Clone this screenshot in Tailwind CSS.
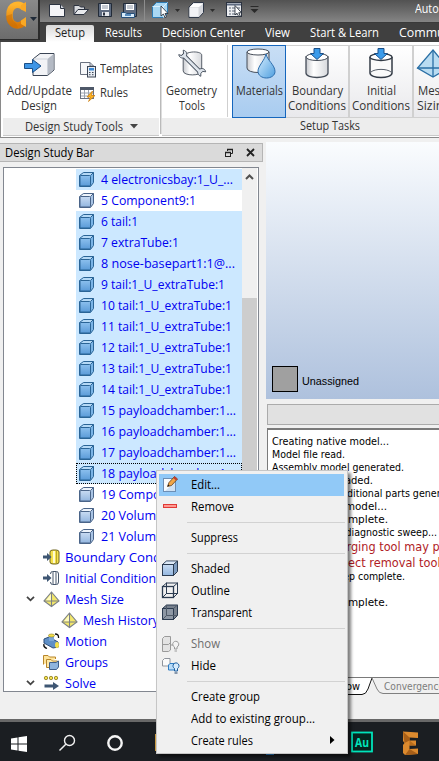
<!DOCTYPE html>
<html lang="en">
<head>
<meta charset="utf-8">
<title>Autodesk CFD</title>
<script src="https://cdn.jsdelivr.net/npm/@tailwindcss/browser@4"></script>
</head>
<body class="w-[439px] h-[761px] overflow-hidden relative bg-[#f0f0f0] font-['Open_Sans','Noto_Sans',sans-serif] text-[12px] text-black whitespace-nowrap">

<svg width="0" height="0" class="absolute">
  <defs>
    <linearGradient id="gBlue" x1="0" y1="0" x2="0" y2="1"><stop offset="0" stop-color="#8cc0ee"/><stop offset="1" stop-color="#5b9bd8"/></linearGradient>
    <linearGradient id="gPale" x1="0" y1="0" x2="0" y2="1"><stop offset="0" stop-color="#c9dcf3"/><stop offset="1" stop-color="#93b6df"/></linearGradient>
    <linearGradient id="gCyl" x1="0" y1="0" x2="1" y2="0"><stop offset="0" stop-color="#c9cbd0"/><stop offset=".35" stop-color="#fff"/><stop offset="1" stop-color="#d6d8dc"/></linearGradient>
    <linearGradient id="gDrop" x1="0" y1="0" x2="1" y2="1"><stop offset="0" stop-color="#d9efff"/><stop offset="1" stop-color="#4f9fdf"/></linearGradient>
    <linearGradient id="gC" x1="0" y1="0" x2="0" y2="1"><stop offset="0" stop-color="#ffb52e"/><stop offset="1" stop-color="#d97706"/></linearGradient>
    <symbol id="cubeSel" viewBox="0 0 16 16"><path d="M.5 4.500 4.500 1.500H14.500V11.500L11.500 15.500H.5Z" fill="#7ab4e6" stroke="#2a6496"/><path d="M1.500 4.500 4.700 2H14L11.500 4.500Z" fill="#b5d9f6"/><rect x="1" y="4.500" width="10.500" height="10.500" rx="1" fill="url(#gBlue)" stroke="#2a6496"/><path d="M11.500 4.500 14.500 1.500" stroke="#2a6496"/></symbol>
    <symbol id="cube" viewBox="0 0 16 16"><path d="M.5 4.500 4.500 1.500H14.500V11.500L11.500 15.500H.5Z" fill="#a9c4e4" stroke="#4a6488"/><path d="M1.500 4.500 4.700 2H14L11.500 4.500Z" fill="#eef4fb"/><rect x="1" y="4.500" width="10.500" height="10.500" rx="1" fill="url(#gPale)" stroke="#4a6488"/><path d="M11.500 4.500 14.500 1.500" stroke="#4a6488"/></symbol>
    <symbol id="pyr" viewBox="0 0 17 17"><path d="M8.500 1 16 10 8.500 15.500 1 10Z" fill="#f3e76a" stroke="#7b8088" stroke-width="1.1"/><path d="M8.500 1V15.500M1 10H16" stroke="#7b8088" stroke-width="1.1"/><path d="M8 3 3 9.300H8Z" fill="#fffbc0"/></symbol>
    <symbol id="chev" viewBox="0 0 9 6"><path d="M1 .8 4.500 4.300 8 .8" fill="none" stroke="#444" stroke-width="1.800"/></symbol>
  </defs>
</svg>

<!-- title bar + tabs -->
<header class="relative h-[42px] bg-[#404040] text-white overflow-hidden">
  <div class="h-[23px] pl-[48px] flex items-center bg-gradient-to-b from-[#525252] to-[#858585] border-b border-[#3a3a3a] relative">
    <svg width="215" height="22" viewBox="48 0 215 22" fill="none">
      <path d="M49.500 4.500H60.500L64.500 8.500V16.500H49.500Z" fill="#f4f4f6" stroke="#2c3340"/><path d="M60.500 4.500V8.500H64.500" stroke="#2c3340" fill="#cfd3da"/>
      <path d="M74 14.500V5.500H79L80.500 7H84.500V9.500" fill="#d8dade" stroke="#2c3340"/><path d="M74 14.500 78 9.500H88.500L84 14.500Z" fill="#e8eaed" stroke="#2c3340"/>
      <path d="M98.500 3.500H111.500V16.500H98.500Z" fill="#5e6b80" stroke="#222b38"/><rect x="101" y="4" width="8" height="6" fill="#fff"/><path d="M102 6H108M102 8H108" stroke="#8b95a5"/><rect x="102" y="12" width="7" height="4" fill="#e4e7ec"/><rect x="103" y="12.500" width="2" height="3" fill="#2c3340"/>
      <path d="M123.500 3.500H136.500V16.500H123.500Z" fill="#5e6b80" stroke="#222b38"/><rect x="126" y="4" width="8" height="6" fill="#fff"/><path d="M127 6H133M127 8H133" stroke="#8b95a5"/><path d="M121.500 12.500H125L126.500 13.500H134.500V17.500H121.500Z" fill="#d9ecfa" stroke="#27507a"/><path d="M125 15H131" stroke="#2c6da8" stroke-width="1.500"/>
      <path d="M144.500 0V21" stroke="#8d8d8d"/>
      <path d="M152.500 6.500 156.500 2.500H167.500V13.500L163.500 17.500H152.500Z" fill="#a9d8f4" stroke="#2e7cb4"/><path d="M152.500 6.500H163.500V17.500M163.500 6.500 167.500 2.500" stroke="#d8f0ff"/><path d="M161 6V16L163.300 14 165 17.500 166.500 16.800 165 13.500H168Z" fill="#fff" stroke="#1c2430" stroke-width=".8"/>
      <path d="M175 9H180L177.500 12ZM210 9H215L212.500 12Z" fill="#2e2e2e"/>
      <path d="M189 7 193.500 2.500H203.500V12.500L199 17.500H189Z" fill="#d5d7dc" stroke="#2f3848"/><path d="M190 7 193.500 3.500H203L199 7Z" fill="#fff"/><path d="M189.500 7.500H198.500V16.500H189.500Z" fill="#f1f2f5"/>
      <rect x="226.500" y="2.500" width="15" height="14" fill="#eceef1" stroke="#2c3340"/><path d="M227 4.500H241" stroke="#5e6b80" stroke-width="2"/><path d="M229 8H231M229 11H231M229 14H231M232 8H240M232 11H240M232 14H240" stroke="#5a6475"/><path d="M235 5.500V15L237 13.200 238.700 16.500 240.200 15.800 238.700 12.700H241.500Z" fill="#fff" stroke="#1c2430" stroke-width=".8"/>
      <path d="M250.500 6.500H258.500" stroke="#2a2a2a"/><path d="M250.500 9H258.500L254.500 13Z" fill="#2a2a2a"/>
    </svg>
    <span class="absolute left-[415px] top-0 leading-[18px]" data-w="47">Autodesk</span>
  </div>
  <nav class="h-[19px] relative flex items-end pl-[46px] text-[12px]">
    <div class="w-[48px] shrink-0 h-[17px] bg-gradient-to-b from-[#d9d9d9] to-white text-[#222] text-center leading-[16px] rounded-t-[2px]"><span data-w="30">Setup</span></div>
    <div class="flex shrink-0 leading-[16px] h-[17px] items-start">
      <div class="pl-[11px] w-[68px]"><span data-w="37">Results</span></div>
      <div class="w-[103px]"><span data-w="83">Decision Center</span></div>
      <div class="w-[45px]"><span data-w="25">View</span></div>
      <div class="w-[89px]"><span data-w="69">Start &amp; Learn</span></div>
      <div><span data-w="67">Community</span></div>
    </div>
  </nav>
  <div class="absolute left-0 top-0 w-[40px] h-[40px] bg-gradient-to-b from-[#8a8a8a] to-[#6c6c6c] border-r-2 border-b border-[#2b2b2b]">
    <svg width="38" height="38" fill="none"><path d="M24 7.500C19 2.500 9.500 4 9.500 15S19 28 24 22" stroke="url(#gC)" stroke-width="6.500"/><path d="M26 2V12L21 9.500V5ZM26 17V27L21 24V20.500Z" fill="#f9a825"/><path d="M6 16C6 24 12 29 18 28L16 23C12 21 12 18 12 14Z" fill="#c96f08" opacity=".55"/><path d="M30 17H37L33.500 21Z" fill="#1f2a38"/></svg>
  </div>
</header>

<!-- ribbon -->
<section class="h-[96px] bg-white border-b border-[#8a8a8a] border-l flex text-[#333] overflow-hidden">
  <div class="w-[159px] shrink-0 pl-[2px] flex flex-col">
    <div class="h-[76px] flex">
      <div class="w-[72px] flex flex-col items-center pt-[8px] shrink-0">
        <svg width="34" height="28" viewBox="0 0 34 28" class="ml-[1px]" fill="none"><path d="M10 9 17 3.500H31V20L24.500 25.500H10Z" fill="#f2f3f6" stroke="#3a4454"/><path d="M24.500 9V25L30.500 19.700V4Z" fill="#b4bac4"/><path d="M10.500 9H24.500V25" stroke="#cdd2da"/><path d="M1.500 13.500H9.500V9.500L18 16 9.500 22.500V18.500H1.500Z" fill="#3d95e6" stroke="#1b4f86"/></svg>
        <div class="leading-[15px] h-[30px] mt-[5px] text-center"><span data-w="65">Add/Update</span><br><span data-w="36">Design</span></div>
      </div>
      <div class="flex flex-col pl-[4px] pt-[18px] gap-[6px]">
        <div class="h-[18px] flex items-center gap-[4px]"><svg width="17" height="17" fill="none"><path d="M1.500 1.500H11L14.500 5V13.500H1.500Z" fill="#f6f7f9" stroke="#6a7280"/><path d="M11 1.500V5H14.500" stroke="#6a7280"/><rect x="8.500" y="5.500" width="8" height="10.500" fill="#e8ecf2" stroke="#3a4454"/><rect x="10" y="7" width="5" height="2.500" fill="#3b8ad6"/><path d="M10 11.500H11.500M13 11.500H14.500M10 13.700H11.500M13 13.700H14.500" stroke="#3a4454"/></svg><span data-w="53">Templates</span></div>
        <div class="h-[18px] flex items-center gap-[4px]"><svg width="17" height="17" fill="none"><rect x="1.500" y="2.500" width="13" height="11" fill="#fff" stroke="#6a7280"/><rect x="1" y="2" width="14" height="3" fill="#4e5868"/><path d="M2 8H14M2 11H14M5.500 5V13M9.500 5V13" stroke="#9aa2ae"/><path d="M13.500 6 8 12H11.500L9.500 16.500 16 10.500H12.500Z" fill="#ffb51f" stroke="#c8780a" stroke-width=".7"/></svg><span data-w="28">Rules</span></div>
      </div>
    </div>
    <div class="h-[18px] w-[156px] bg-[#ededed] border-b border-[#c9c9c9] pl-[22px] leading-[16px] flex items-center gap-[7px]"><span data-w="98">Design Study Tools</span><svg width="8" height="5"><path d="M0 0H8L4 4.500Z" fill="#444"/></svg></div>
  </div>
  <div class="w-[2px] shrink-0 h-[91px] mt-px bg-[#a9a9a9]/80 border-r border-[#ddd]"></div>
  <div class="w-[277px] shrink-0 overflow-hidden">
    <div class="h-[76px] w-[311px] flex">
      <div class="w-[60px] flex flex-col items-center pt-[6px] shrink-0 pr-px">
        <svg width="30" height="30" viewBox="0 0 34 32" fill="none"><path d="M7 9V25C7 31 28 31 28 25V7C28 2 9 2 7 9Z" fill="url(#gCyl)" stroke="#444c58"/><path d="M6 6 27 27" stroke="#3a4452" stroke-width="5"/><path d="M7 1.500C11 2 12 6 10 9 7 11.500 2.500 10.500 2 6.500L5 7.500 7.500 5.500Z M27 31C23.500 30 22.500 26.500 25 23.500 28 21 32 22.500 32.500 26L29 25.500 27 28Z" fill="#dfe5ec" stroke="#3a4452"/><path d="M7.500 7.500 26.500 26.500" stroke="#dfe5ec" stroke-width="3"/></svg>
        <div class="leading-[15px] h-[30px] mt-[5px] text-center"><span data-w="51">Geometry</span><br><span data-w="26">Tools</span></div>
      </div>
      <div class="w-[10px] shrink-0 flex justify-center"><div class="w-px h-[72px] mt-[3px] bg-[#cfcfcf]"></div></div>
      <div class="w-[54px] shrink-0 h-[73px] mt-[3px] border border-[#1566bd] bg-gradient-to-b from-[#c8def5] to-[#a9ccf0] flex flex-col items-center">
        <svg width="34" height="33" viewBox="0 0 34 33" fill="none"><path d="M5 6V22C5 28 27 28 27 22V6Z" fill="url(#gCyl)" stroke="#444c58"/><ellipse cx="16" cy="6" rx="11" ry="3" fill="#fff" stroke="#444c58"/><path d="M24 8C25 14 33 19 33 25.500 33 29.500 29 32 24.500 32S16 29.500 16 25C16 20 23 14 24 8Z" fill="url(#gDrop)" stroke="#2f6fae"/></svg>
        <div class="leading-[15px] mt-[4px]"><span data-w="47">Materials</span></div>
      </div>
      <div class="w-[64px] shrink-0 h-[73px] mt-[3px] border border-l-0 border-[#d0d0d0] border-r-2 bg-gradient-to-b from-white to-[#e9e9ec] flex flex-col items-center">
        <svg width="26" height="33" viewBox="0 0 26 33" fill="none"><path d="M2 11V27C2 33 24 33 24 27V11Z" fill="url(#gCyl)" stroke="#444c58" stroke-width="1.300"/><ellipse cx="13" cy="11" rx="11" ry="3.500" fill="#fff" stroke="#444c58"/><path d="M10 2.500H16V7.500H19.500L13 13.500 6.500 7.500H10Z" fill="#3b9bea" stroke="#1a4f88"/></svg>
        <div class="leading-[15px] mt-[4px] text-center"><span data-w="51">Boundary</span><br><span data-w="58">Conditions</span></div>
      </div>
      <div class="w-[64px] shrink-0 h-[73px] mt-[3px] border border-l-0 border-[#d0d0d0] border-r-2 bg-gradient-to-b from-white to-[#e9e9ec] flex flex-col items-center">
        <svg width="26" height="33" viewBox="0 0 26 33" fill="none"><path d="M2 11V27C2 33 24 33 24 27V11" fill="#fafafa" stroke="#333b46" stroke-width="1.500"/><ellipse cx="13" cy="11" rx="11" ry="3.500" fill="#fff" stroke="#333b46" stroke-width="1.300"/><path d="M3 26C7 22.500 19 22.500 23 26" stroke="#555d68"/><path d="M10 2.500H16V7.500H19.500L13 13.500 6.500 7.500H10Z" fill="#3b9bea" stroke="#1a4f88"/></svg>
        <div class="leading-[15px] mt-[4px] text-center"><span data-w="29">Initial</span><br><span data-w="58">Conditions</span></div>
      </div>
      <div class="w-[60px] shrink-0 h-[73px] mt-[3px] border-y border-[#d0d0d0] bg-gradient-to-b from-white to-[#e9e9ec]">
        <svg width="34" height="33" viewBox="0 0 34 33" fill="none" class="ml-[2px]"><path d="M17 4 32 22 17 31 1.500 22Z" fill="#b9dcf2" stroke="#2a6fa5" stroke-width="1.300"/><path d="M17 4V31M1.500 22H32" stroke="#2a6fa5" stroke-width="1.300"/></svg>
        <div class="leading-[15px] mt-[4px] pl-[3px]"><span class="ml-px" data-w="29">Mesh</span><br><span data-w="33">Sizing</span></div>
      </div>
    </div>
    <div class="h-[18px] bg-[#ededed] border-b border-[#c9c9c9] leading-[16px] pl-[138px]"><span data-w="60">Setup Tasks</span></div>
  </div>
</section>

<!-- workspace -->
<main class="flex h-[581px] overflow-hidden">
  <aside class="w-[263px] shrink-0 pt-[5px]">
    <div class="h-[19px] bg-[#dadada] border border-[#b5b5b5] border-l-0 flex items-center pl-[5px] leading-[17px]"><span data-w="89">Design Study Bar</span>
      <svg width="10" height="10" class="ml-[130px]" fill="none"><path d="M3.500 3V1.500H8.500V5.500H7" stroke="#222"/><path d="M3 1.500H9" stroke="#222" stroke-width="1.500"/><rect x="1.500" y="4.500" width="5" height="4" stroke="#222"/><path d="M1 4.500H7" stroke="#222" stroke-width="1.500"/></svg>
      <svg width="9" height="9" class="ml-[12px]"><path d="M1 1 8 8M8 1 1 8" stroke="#222" stroke-width="1.800"/></svg>
    </div>
    <div class="ml-[3px] mt-[5px] w-[256px] h-[525px] border border-[#828790] bg-white flex justify-between overflow-hidden">
      <div id="tree" class="w-[238px] text-[12.5px] text-[#0000f0] pt-px"></div>
      <div class="w-[15px] mr-px bg-[#f0f0f0] flex flex-col items-center pt-[6px]">
        <svg width="9" height="6"><path d="M1 5 4.500 1.500 8 5" fill="none" stroke="#505050" stroke-width="2"/></svg>
        <div class="w-full h-[300px] mt-[118px] bg-[#cdcdcd]"></div>
      </div>
    </div>
  </aside>
  <div class="w-[3px] shrink-0"></div>
  <section class="w-[173px] shrink-0 pt-[4px] overflow-hidden">
    <div class="h-[257px] bg-gradient-to-b from-[#fafcfe] to-[#aec1dd] flex items-end pb-[7px] pl-[6px] gap-[4px] font-['Liberation_Sans',sans-serif] text-[11.5px]">
      <div class="w-[26px] h-[26px] bg-[#a0a0a0] border border-black"></div><div class="h-[20px] leading-[20px] mb-px"><span data-w="57">Unassigned</span></div>
    </div>
    <div class="ml-px mt-[5px] h-[21px] border border-r-0 border-[#ababab] bg-[#e1e1e1]"></div>
    <div class="ml-px mt-[3px] h-[250px] border-l border-t-2 border-b border-[#7a7a7a] bg-white pl-[4px] pt-[5px] leading-[13px] text-[11px] font-['DejaVu_Sans_Condensed','DejaVu_Sans',sans-serif] overflow-hidden">
      <div><span data-w="117">Creating native model...</span></div>
      <div><span data-w="73">Model file read.</span></div>
      <div><span data-w="132">Assembly model generated.</span></div>
      <div><span data-w="101">Geometry is loaded.</span></div>
      <div><span data-w="190">Checking for additional parts generated</span></div>
      <div><span data-w="115">Preparing the model...</span></div>
      <div><span data-w="116">Preparation complete.</span></div>
      <div><span data-w="165">Starting model diagnostic sweep...</span></div>
      <div class="text-[#b01c26] text-[13px] leading-[16px]"><span data-w="217">The edge merging tool may produce a</span></div>
      <div class="text-[#b01c26] text-[13px] leading-[16px]"><span data-w="197">The small object removal tool may</span></div>
      <div class="leading-[12px]"><span data-w="133">Diagnostic sweep complete.</span></div>
      <div>&nbsp;</div>
      <div><span data-w="116">Preparation complete.</span></div>
    </div>
    <div class="ml-px h-[17px] relative text-[11px] font-['DejaVu_Sans_Condensed','DejaVu_Sans',sans-serif]">
      <svg width="172" height="17" class="absolute left-0 top-0" fill="none"><path d="M0 0H107L101 13Q100 16 97 16H0Z" fill="#fff"/><path d="M0 16.500H95Q99 16.500 101 11L105 0" stroke="#111"/><path d="M105 0 110 11Q112 15.500 116 15.500H172" stroke="#808080"/></svg>
      <div class="absolute left-[17px] top-px leading-[15px]"><span data-w="76">Output Window</span></div>
      <div class="absolute left-[117px] top-[2px] leading-[13px] text-[#7c7c7c]"><span data-w="60">Convergence</span></div>
    </div>
  </section>
</main>

<!-- taskbar -->
<footer class="h-[42px] bg-[#1b1e22] border-t-[3px] border-[#686868]">
  <svg width="439" height="39" viewBox="0 722 439 39" fill="none">
    <path d="M11 738.500 17.500 737.500V743.500H11ZM18.500 737.300 27 736V743.500H18.500ZM11 744.500H17.500V750.500L11 749.500ZM18.500 744.500H27V752L18.500 750.700Z" fill="#fff"/>
    <circle cx="69.500" cy="740.500" r="5" stroke="#f2f2f2" stroke-width="1.400"/><path d="M65.800 744.300 59.500 750.500" stroke="#f2f2f2" stroke-width="1.500"/>
    <circle cx="115" cy="743" r="6.700" stroke="#f5f5f5" stroke-width="2.400"/>
    <rect x="155" y="734" width="20" height="17" fill="#c99a42"/><path d="M266 753.500H274" stroke="#2b88d8" stroke-width="3"/>
    <rect x="352" y="732.500" width="20" height="19" fill="#07251f" stroke="#00e4bb" stroke-width="1.800"/>
    <path d="M403 731.500 418 732.500V738L409.500 737.500V740.500H416V745.500H409.500V749L418 748.500V754L405 755 403 753V745L404.500 743 403 741Z" fill="#dc8a2e"/><path d="M403 731.500 409.500 737.500V740.500L404.500 743ZM409.500 749 418 754 405 755Z" fill="#a85f18"/><path d="M409.500 740.500 416 745.500H409.500Z" fill="#b96d1c"/>
    <text x="355" y="746.500" font-family="Open Sans" font-weight="700" font-size="11.500" fill="#00e4bb" textLength="14" lengthAdjust="spacingAndGlyphs">Au</text>
  </svg>
</footer>

<!-- context menu -->
<div class="absolute left-[156px] top-[470px] w-[192px] h-[284px] bg-[#f0f0f0] border border-[#c6c6c6] shadow-[3px_3px_3px_rgba(0,0,0,0.5)] p-[2px] pt-[3px] text-[12px] leading-[22px]">
  <div class="h-[22px] mr-px bg-[#91c9f7] flex items-center"><svg width="32" height="22" fill="none"><rect x="4.500" y="4.500" width="12" height="13" fill="#f7fbff" stroke="#6d8fb5"/><path d="M6 17H16V8Z" fill="#cfe2f5"/><path d="M8.500 12.500 10 8.500 15.500 2.500 18.500 5 12.500 11.500Z" fill="#f2a646" stroke="#5b3a1a" stroke-width=".8"/><path d="M15.500 2.500 18.500 5 17 6.500 14.200 4Z" fill="#c43b32"/><path d="M8.500 12.500 9.300 10.500 10.500 11.500Z" fill="#111"/></svg><span data-w="29">Edit...</span></div>
  <div class="h-[22px] flex items-center"><svg width="32" height="22"><rect x="4.500" y="8.500" width="13" height="3" fill="#ff9a92" stroke="#e03a36"/></svg><span data-w="43">Remove</span></div>
  <div class="h-[9px] py-[4px] pl-[28px]"><div class="h-px bg-[#d2d2d2]"></div></div>
  <div class="h-[22px] flex pl-[32px]"><span data-w="47">Suppress</span></div>
  <div class="h-[9px] py-[4px] pl-[28px]"><div class="h-px bg-[#d2d2d2]"></div></div>
  <div class="h-[22px] flex items-center"><svg width="32" height="22" fill="none"><path d="M3.500 6.500 7.500 3H18.500V13.500L14.500 17.500H3.500Z" fill="#7e9cc0" stroke="#2b3b50"/><path d="M4 6.500 7.500 3.500H18L14.500 6.500Z" fill="#dde9f6"/><rect x="3.500" y="6.500" width="11" height="11" fill="url(#gPale)" stroke="#2b3b50"/><path d="M14.500 6.500 18.500 3" stroke="#2b3b50"/></svg><span data-w="39">Shaded</span></div>
  <div class="h-[22px] flex items-center"><svg width="32" height="22" fill="none" stroke="#2b3b50"><rect x="3.500" y="6.500" width="11" height="11" stroke-width="1.300"/><rect x="7.500" y="3" width="11" height="10.500"/><path d="M3.500 6.500 7.500 3M14.500 6.500 18.500 3M3.500 17.500 7.500 13.500M14.500 17.500 18.500 13.500"/></svg><span data-w="39">Outline</span></div>
  <div class="h-[22px] flex items-center"><svg width="32" height="22" fill="none" stroke="#2b3b50"><path d="M3.500 6.500 7.500 3H18.500V13.500L14.500 17.500H3.500Z" fill="#77818e"/><rect x="3.500" y="6.500" width="11" height="11" fill="#8e98a5"/><path d="M7.500 3V13.500H18.500M3.500 17.500 7.500 13.500M14.500 6.500 18.500 3" stroke="#4f5a68"/></svg><span data-w="61">Transparent</span></div>
  <div class="h-[9px] py-[4px] pl-[28px]"><div class="h-px bg-[#d2d2d2]"></div></div>
  <div class="h-[22px] flex items-center text-[#6d6d6d]"><svg width="32" height="22" fill="#e3e3e3" stroke="#9a9a9a"><path d="M3.500 5.500 5.500 3.500H11.500V17L9.500 18.500H3.500Z"/><path d="M3.500 11.500H9.500L11.500 9.500M11.500 12H14" fill="none"/><path d="M15.500 16V14A3 3 0 1 1 18 14V16Z" fill="#f4f4f4"/><path d="M15.500 18H18"/></svg><span data-w="29">Show</span></div>
  <div class="h-[22px] flex items-center"><svg width="32" height="22" fill="none"><path d="M3.500 5.500 5.500 3.500H11V9L9.500 11H3.500Z" fill="#fafafa" stroke="#8f949c"/><path d="M9.500 10 11 8.500H16V15H9.500Z" fill="#b9dcf8" stroke="#2d7cc4"/><path d="M15.500 16V13.500A3 3 0 1 1 18.500 13.500V16Z" fill="#d6ebfc" stroke="#1f5f9e"/><path d="M15.500 18H18.500" stroke="#1f3f66"/></svg><span data-w="25">Hide</span></div>
  <div class="h-[9px] py-[4px] pl-[28px]"><div class="h-px bg-[#d2d2d2]"></div></div>
  <div class="h-[22px] flex pl-[32px]"><span data-w="69">Create group</span></div>
  <div class="h-[22px] flex pl-[32px]"><span data-w="124">Add to existing group...</span></div>
  <div class="h-[22px] flex pl-[32px] pr-[10px] items-center justify-between"><span data-w="62">Create rules</span><svg width="5" height="8" class="mb-[2px]"><path d="M0 0 4.500 4 0 8Z"/></svg></div>
</div>

<script>
  const leaf = [
    ['4 electronicsbay:1_U_...', 132, 1], ['5 Component9:1', 95, 0], ['6 tail:1', 37, 1], ['7 extraTube:1', 78, 1],
    ['8 nose-basepart1:1@...', 134, 1], ['9 tail:1_U_extraTube:1', 124, 1], ['10 tail:1_U_extraTube:1', 131, 1],
    ['11 tail:1_U_extraTube:1', 131, 1], ['12 tail:1_U_extraTube:1', 131, 1], ['13 tail:1_U_extraTube:1', 131, 1],
    ['14 tail:1_U_extraTube:1', 131, 1], ['15 payloadchamber:1...', 135, 1], ['16 payloadchamber:1...', 135, 1],
    ['17 payloadchamber:1...', 135, 1], ['18 payloadchamber:1...', 135, 2], ['19 Component10:1', 111, 0],
    ['20 Volume', 62, 0], ['21 Volume', 62, 0]];
  const rowClass = ['', 'bg-[#cce8ff]', 'bg-[#cce8ff] outline-1 outline-dotted outline-black -outline-offset-1'];
  let html = leaf.map(([t, w, s]) =>
    `<div class="h-[21px] ml-[72px] w-[166px] pl-[3px] flex items-center gap-[6px] leading-[21px] ${rowClass[s]}"><svg width="16" height="16" class="shrink-0 mb-[2px]"><use href="#${s ? 'cubeSel' : 'cube'}"/></svg><span data-w="${w}">${t}</span></div>`).join('');
  const arrow = '<path d="M0 6.500H4V4L8.500 8 4 12V9.500H0Z" fill="#3e5673"/>';
  const icons = {
    bc: '<path d="M7 3Q7 1 10 1H13Q16 1 16 3V13Q16 15 13 15H10Q7 15 7 13Z" fill="#f4e04a" stroke="#6e6420"/><path d="M11 2V14" stroke="#fffbd0" stroke-width="2"/><path d="M13.500 2V14" stroke="#b9a52a"/>' + arrow,
    ic: '<path d="M7.500 4Q7.500 1.500 9.500 1.500H13.500Q15.500 1.500 15.500 4V12Q15.500 14.500 13.500 14.500H9.500Q7.500 14.500 7.500 12M10 2V14M13 2V14" fill="none" stroke="#46566b"/>' + arrow,
    mesh: '<use href="#pyr"/>',
    motion: '<path d="M1 6 6 4 15 9 15.500 14 10 15 1 10Z" fill="#5f8fc6" stroke="#2f4f7a"/><path d="M6 2.500H11V8H6Z" fill="#7ba7d8"/><ellipse cx="8.500" cy="2.500" rx="3" ry="1.500" fill="#f4e04a" stroke="#8a7a20" stroke-width=".6"/><ellipse cx="14" cy="12" rx="2" ry="3" fill="#f4e04a"/><path d="M12 1Q16 1 15.500 5M1 11Q0 14 4 15.500" fill="none" stroke="#111" stroke-width="1.300"/>',
    groups: '<path d="M.5 10.500V1.500H5L6.500 3H12.500V5" fill="#ffe49a" stroke="#b8862b"/><path d="M3.500 13.500V5.500H8L9.500 7H14.500V13.500Z" fill="#ffe9a8" stroke="#b8862b"/><path d="M6.500 8.500H13L15.500 7V13L13.500 15.500H6.500Z" fill="#8fb4de" stroke="#3f5f8c"/>',
    solve: '<g fill="#f4e04a" stroke="#8a7a20" stroke-width=".8"><circle cx="3" cy="3" r="1.700"/><circle cx="8" cy="3" r="1.700"/><circle cx="13" cy="3" r="1.700"/></g><path d="M1.500 9.500H10V7L16 11 10 15V12.500H1.500Z" fill="#3e5673"/>'
  };
  [['bc', 'Boundary Conditions', 130, 0, 0], ['ic', 'Initial Conditions', 97, 0, 0], ['mesh', 'Mesh Size', 59, 0, 1], ['mesh', 'Mesh History', 76, 1, 0],
   ['motion', 'Motion', 42, 0, 0], ['groups', 'Groups', 43, 0, 0], ['solve', 'Solve', 31, 0, 1]].forEach(([i, t, w, deep, open]) => {
    html += `<div class="h-[21px] flex items-center leading-[21px] ${deep ? 'pl-[40px]' : 'pl-[22px]'}"><svg width="9" height="6" class="mb-[2px] mr-[8px]">${open ? '<use href="#chev"/>' : ''}</svg><svg width="17" height="17" class="shrink-0 mb-px mr-[5px]">${icons[i]}</svg><span data-w="${w}">${t}</span></div>`;
  });
  document.getElementById('tree').innerHTML = html;

  // condense or widen each label to its column width
  function fit() {
    document.querySelectorAll('[data-w]').forEach(e => {
      e.classList.add('inline-block', 'origin-left', 'shrink-0', 'text-left');
      e.style.width = 'max-content';
      e.style.transform = 'none';
      const w = e.getBoundingClientRect().width, target = +e.dataset.w;
      e.style.width = target + 'px';
      e.style.transform = `scaleX(${(target / w).toFixed(4)})`;
    });
  }
  fit();
  window.addEventListener('load', () => { fit(); requestAnimationFrame(fit); setTimeout(fit, 60); });
  document.fonts.ready.then(fit);
</script>
</body>
</html>
